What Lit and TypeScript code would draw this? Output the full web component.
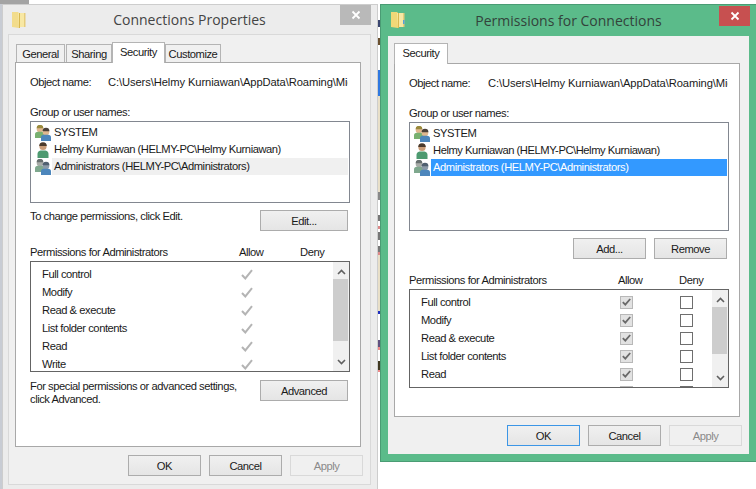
import { LitElement, html, css, svg } from "lit";
import { customElement } from "lit/decorators.js";

const folder = (pale: boolean) => svg`<svg class="folder" width="16" height="20" viewBox="0 0 16 20">
  <path d="M1 2h6l1 1v15l-7-1z" fill="${pale ? "#f2dc8c" : "#f0d878"}"/>
  <path d="M7 3h6v14H8z" fill="#f8e8a4"/>
  <path d="M8 3h1v15H8z" fill="#d8b850"/>
  <path d="M13 3h1.500v14H13z" fill="#e6cc7c"/>
  ${pale ? "" : svg`<path d="M13 10h1.500v4H13z" fill="#5aa0d8"/>`}
</svg>`;

const person = (x: number, y: number, shirt: string, hair: string, face: string) => svg`
  <circle cx="${x}" cy="${y}" r="3.300" fill="${face}"/>
  <path d="M${x - 3.4} ${y - 0.8}a3.400 3.400 0 0 1 6.800 0z" fill="${hair}"/>
  <path d="M${x - 5} ${y + 9}v-3.500q0-2.500 3-2.700h4q3 .2 3 2.700v3.500z" fill="${shirt}"/>`;

const groupIcon = (dim: boolean) => svg`<svg class="uicon" width="18" height="16" viewBox="0 0 18 16">
  ${person(6, 4, dim ? "#7fa88e" : "#78b070", dim ? "#687070" : "#9a8a3c", dim ? "#a8aca8" : "#e0b890")}
  ${person(12, 7, "#4c86bc", dim ? "#506070" : "#4a4038", dim ? "#8c9aa8" : "#e0b890")}
</svg>`;

const userIcon = svg`<svg class="uicon" width="18" height="16" viewBox="0 0 18 16">
  <circle cx="9" cy="4.500" r="3.600" fill="#c89c78"/>
  <path d="M5.200 4a3.800 3.800 0 0 1 7.600 0z" fill="#4a3a2c"/>
  <path d="M3.500 16v-4q0-3 3-3.500h5q3 .5 3 3.500v4z" fill="#4d9a70"/>
</svg>`;

const grayCheck = svg`<svg width="12" height="11" viewBox="0 0 12 11"><path d="M1 6l3.300 3.500L11 1.200" fill="none" stroke="#b4b4b4" stroke-width="2"/></svg>`;
const darkCheck = svg`<svg width="9" height="8" viewBox="0 0 9 8"><path d="M.8 4.200l2.500 2.500L8.200 1" fill="none" stroke="#6a6a6a" stroke-width="1.800"/></svg>`;
const up = svg`<svg width="9" height="6" viewBox="0 0 9 6"><path d="M1 5l3.500-3.500L8 5" fill="none" stroke="#606060" stroke-width="1.600"/></svg>`;
const down = svg`<svg width="9" height="6" viewBox="0 0 9 6"><path d="M1 1l3.500 3.500L8 1" fill="none" stroke="#606060" stroke-width="1.600"/></svg>`;
const closeX = svg`<svg width="10" height="10" viewBox="0 0 10 10"><path d="M1.500 1.500l7 7m0-7l-7 7" stroke="#fff" stroke-width="1.800"/></svg>`;

const PATH = "C:\\Users\\Helmy Kurniawan\\AppData\\Roaming\\Microsoft";
const PERMS = ["Full control", "Modify", "Read & execute", "List folder contents", "Read", "Write"];
const BITS: [number, number, string][] = [
  [20, 7, "#3a4670"], [38, 7, "#6a5030"], [70, 26, "#2f78e0"], [96, 96, "#e8dfc8"], [192, 8, "#888"],
  [215, 6, "#777"], [226, 3, "#d88"], [232, 8, "#777"], [246, 6, "#777"], [252, 3, "#d88"],
  [255, 56, "#e8dfc8"], [311, 3, "#2030c0"], [340, 7, "#605080"], [347, 3, "#e88"], [361, 9, "#403820"], [370, 2, "#e88"],
];

@customElement("app-root")
export class AppRoot extends LitElement {
  static styles = css`
    :host { display: block; position: relative; width: 756px; height: 489px; overflow: hidden; background: #fff;
      font-family: "Liberation Sans", Arial, sans-serif; font-size: 11.2px; letter-spacing: -0.45px; color: #1a1a1a; }
    .topstrip { position: absolute; left: 0; top: 0; width: 29px; height: 4px; background: #a4a4a4; }
    .leftstrip { position: absolute; left: 0; top: 4px; bottom: 0; width: 2px; background: #c8ccd4; }
    .bit { position: absolute; left: 378px; width: 2px; }
    .win { position: absolute; box-sizing: border-box; display: flex; flex-direction: column; }
    .win.a { left: 2px; top: 4px; width: 376px; height: 485px; background: #ececec; border: 1px solid #cdcdcd; border-bottom: 0; padding: 0 6px 4px 5px; }
    .win.b { left: 380px; top: 4px; width: 376px; height: 458px; background: #5bbb8a; border: 1px solid #4a9c74; border-right: 0; padding: 0 7px 7px 7px; }
    .title { height: 29px; flex: none; position: relative; display: flex; align-items: center; justify-content: center;
      font-family: "Open Sans", sans-serif; font-size: 14px; letter-spacing: 0; color: #444; }
    .b .title { height: 31px; color: #33433b; }
    .folder { position: absolute; left: 3px; top: 5px; }
    .b .folder { left: 2px; }
    .close { position: absolute; top: 0; right: 0; width: 31px; height: 20px; display: flex; align-items: center; justify-content: center; background: #b9b9b9; }
    .b .close { background: #c75050; right: -1px; top: 1px; }
    .client { flex: 1; min-height: 0; box-sizing: border-box; background: #f0f0f0; display: flex; flex-direction: column; }
    .a .client { border: 1px solid #d9d9d9; padding: 7px 8px 0 6px; }
    .b .client { padding: 7px 9px 0 6px; }
    .tabs { display: flex; height: 20px; align-items: flex-end; flex: none; position: relative; z-index: 1; }
    .a .tabs { padding-left: 1px; }
    .tab { box-sizing: border-box; height: 18px; border: 1px solid #b4b4b4; border-bottom: 0; background: #f0f0f0; display: flex; align-items: center; justify-content: center; }
    .tab + .tab { margin-left: 1px; }
    .tab.on { height: 21px; background: #fff; margin-left: 0; margin-bottom: -1px; padding-bottom: 3px; }
    .tab.on + .tab { margin-left: 0; }
    .pane { box-sizing: border-box; background: #fff; border: 1px solid #a8a8a8; flex: none; width: 346px; padding: 0 10px 0 14px; display: flex; flex-direction: column; }
    .a .pane { height: 385px; }
    .b .pane { height: 354px; }
    .objrow { display: flex; margin-top: 11px; height: 16px; align-items: center; white-space: nowrap; }
    .objrow .k { width: 78px; flex: none; }
    .b .objrow .k { width: 79px; }
    .objrow .v { width: 240px; overflow: hidden; letter-spacing: -0.1px; }
    .lab { height: 14px; line-height: 14px; white-space: nowrap; }
    .grp { margin-top: 15px; margin-bottom: 2px; }
    .users { box-sizing: border-box; width: 320px; border: 1px solid #828790; background: #fff; padding-top: 2px; flex: none; }
    .a .users { height: 82px; }
    .b .users { height: 109px; }
    .u { height: 17px; display: flex; align-items: center; position: relative; white-space: nowrap; }
    .uicon { flex: none; margin: 0 0 0 3px; }
    .u span { flex: 1; height: 17px; line-height: 17px; padding-left: 2px; margin-right: 1px; }
    .a .u.sel span { background: #f0f0f0; }
    .b .u.sel span { background: #3399ff; color: #fff; }
    .btn { box-sizing: border-box; height: 21px; border: 1px solid #acacac; background: linear-gradient(#f0f0f0, #e5e5e5); display: flex; align-items: center; justify-content: center; flex: none; }
    .btn.w88 { width: 88px; }
    .btn.w73 { width: 73px; }
    .btn.off { background: #f0f0f0; border-color: #d9d9d9; color: #8a8a8a; }
    .btn.def { border-color: #3c96e6; }
    .row1 { display: flex; justify-content: space-between; padding-right: 2px; margin-top: 7px; height: 21px; }
    .row1 .lab { height: 13px; line-height: 13px; }
    .row2 { display: flex; justify-content: flex-end; gap: 8px; padding-right: 2px; margin-top: 7px; }
    .perm-head { display: flex; margin-top: 14px; margin-bottom: 2px; }
    .perm-head .t { width: 209px; }
    .perm-head .al { width: 61px; }
    .plist { box-sizing: border-box; width: 320px; border: 1px solid #646464; background: #fff; position: relative; overflow: hidden; flex: none; padding-top: 3px; }
    .a .plist { height: 111px; }
    .b .plist { height: 99px; }
    .p { height: 18px; display: flex; align-items: center; white-space: nowrap; padding-left: 11px; }
    .p .n { width: 199px; flex: none; }
    .cell { width: 13px; height: 13px; box-sizing: border-box; flex: none; display: flex; align-items: center; justify-content: center; }
    .cell.allow { background: #e2e2e2; border: 1px solid #b8b8b8; }
    .cell.deny { border: 1px solid #6e6e6e; background: #fff; margin-left: 47px; }
    .sb { position: absolute; right: 0; top: 0; bottom: 0; width: 16px; background: #f0f0f0; display: flex; flex-direction: column; align-items: center; justify-content: space-between; padding: 7px 0 6px; box-sizing: border-box; }
    .thumb { position: absolute; left: 0; right: 1px; background: #cdcdcd; }
    .a .thumb { top: 17px; height: 62px; }
    .b .thumb { top: 17px; height: 47px; }
    .adv { display: flex; justify-content: space-between; padding-right: 2px; margin-top: 8px; }
    .adv .txt { line-height: 13px; white-space: nowrap; }
    .foot { display: flex; justify-content: flex-end; gap: 8px; flex: none; margin-top: 8px; margin-right: -2px; }
    .a .foot { margin-right: -1px; }
  `;

  private users() {
    return html`<div class="users">
      <div class="u">${groupIcon(false)}<span>SYSTEM</span></div>
      <div class="u">${userIcon}<span>Helmy Kurniawan (HELMY-PC\\Helmy Kurniawan)</span></div>
      <div class="u sel">${groupIcon(true)}<span>Administrators (HELMY-PC\\Administrators)</span></div>
    </div>`;
  }

  private head() {
    return html`<div class="objrow"><div class="k">Object name:</div><div class="v">${PATH}</div></div>
      <div class="lab grp">Group or user names:</div>`;
  }

  private sb() {
    return html`<div class="sb"><div class="thumb"></div>${up}${down}</div>`;
  }

  private foot(def: boolean) {
    return html`<div class="foot">
      <div class="btn w73 ${def ? "def" : ""}">OK</div><div class="btn w73">Cancel</div><div class="btn w73 off">Apply</div>
    </div>`;
  }

  render() {
    return html`
      <div class="topstrip"></div>
      <div class="leftstrip"></div>
      ${BITS.map(([t, h, c]) => html`<div class="bit" style="top:${t}px;height:${h}px;background:${c}"></div>`)}
      <div class="win a">
        <div class="title">${folder(true)}Connections Properties<div class="close">${closeX}</div></div>
        <div class="client">
          <div class="tabs">
            <div class="tab" style="width:49px">General</div><div class="tab" style="width:46px">Sharing</div><div class="tab on" style="width:53px">Security</div><div class="tab" style="width:56px">Customize</div>
          </div>
          <div class="pane">
            ${this.head()}
            ${this.users()}
            <div class="row1"><div class="lab">To change permissions, click Edit.</div><div class="btn w88">Edit...</div></div>
            <div class="perm-head"><div class="t lab">Permissions for Administrators</div><div class="al lab">Allow</div><div class="lab">Deny</div></div>
            <div class="plist">
              ${PERMS.map((n) => html`<div class="p"><div class="n">${n}</div>${grayCheck}</div>`)}
              ${this.sb()}
            </div>
            <div class="adv"><div class="txt">For special permissions or advanced settings,<br />click Advanced.</div><div class="btn w88">Advanced</div></div>
          </div>
          ${this.foot(false)}
        </div>
      </div>
      <div class="win b">
        <div class="title">${folder(false)}Permissions for Connections<div class="close">${closeX}</div></div>
        <div class="client">
          <div class="tabs"><div class="tab on" style="width:54px">Security</div></div>
          <div class="pane">
            ${this.head()}
            ${this.users()}
            <div class="row2"><div class="btn w73">Add...</div><div class="btn w73">Remove</div></div>
            <div class="perm-head"><div class="t lab">Permissions for Administrators</div><div class="al lab">Allow</div><div class="lab">Deny</div></div>
            <div class="plist">
              ${PERMS.map((n) => html`<div class="p"><div class="n">${n === "Write" ? "" : n}</div><div class="cell allow">${darkCheck}</div><div class="cell deny"></div></div>`)}
              ${this.sb()}
            </div>
          </div>
          ${this.foot(true)}
        </div>
      </div>
    `;
  }
}
